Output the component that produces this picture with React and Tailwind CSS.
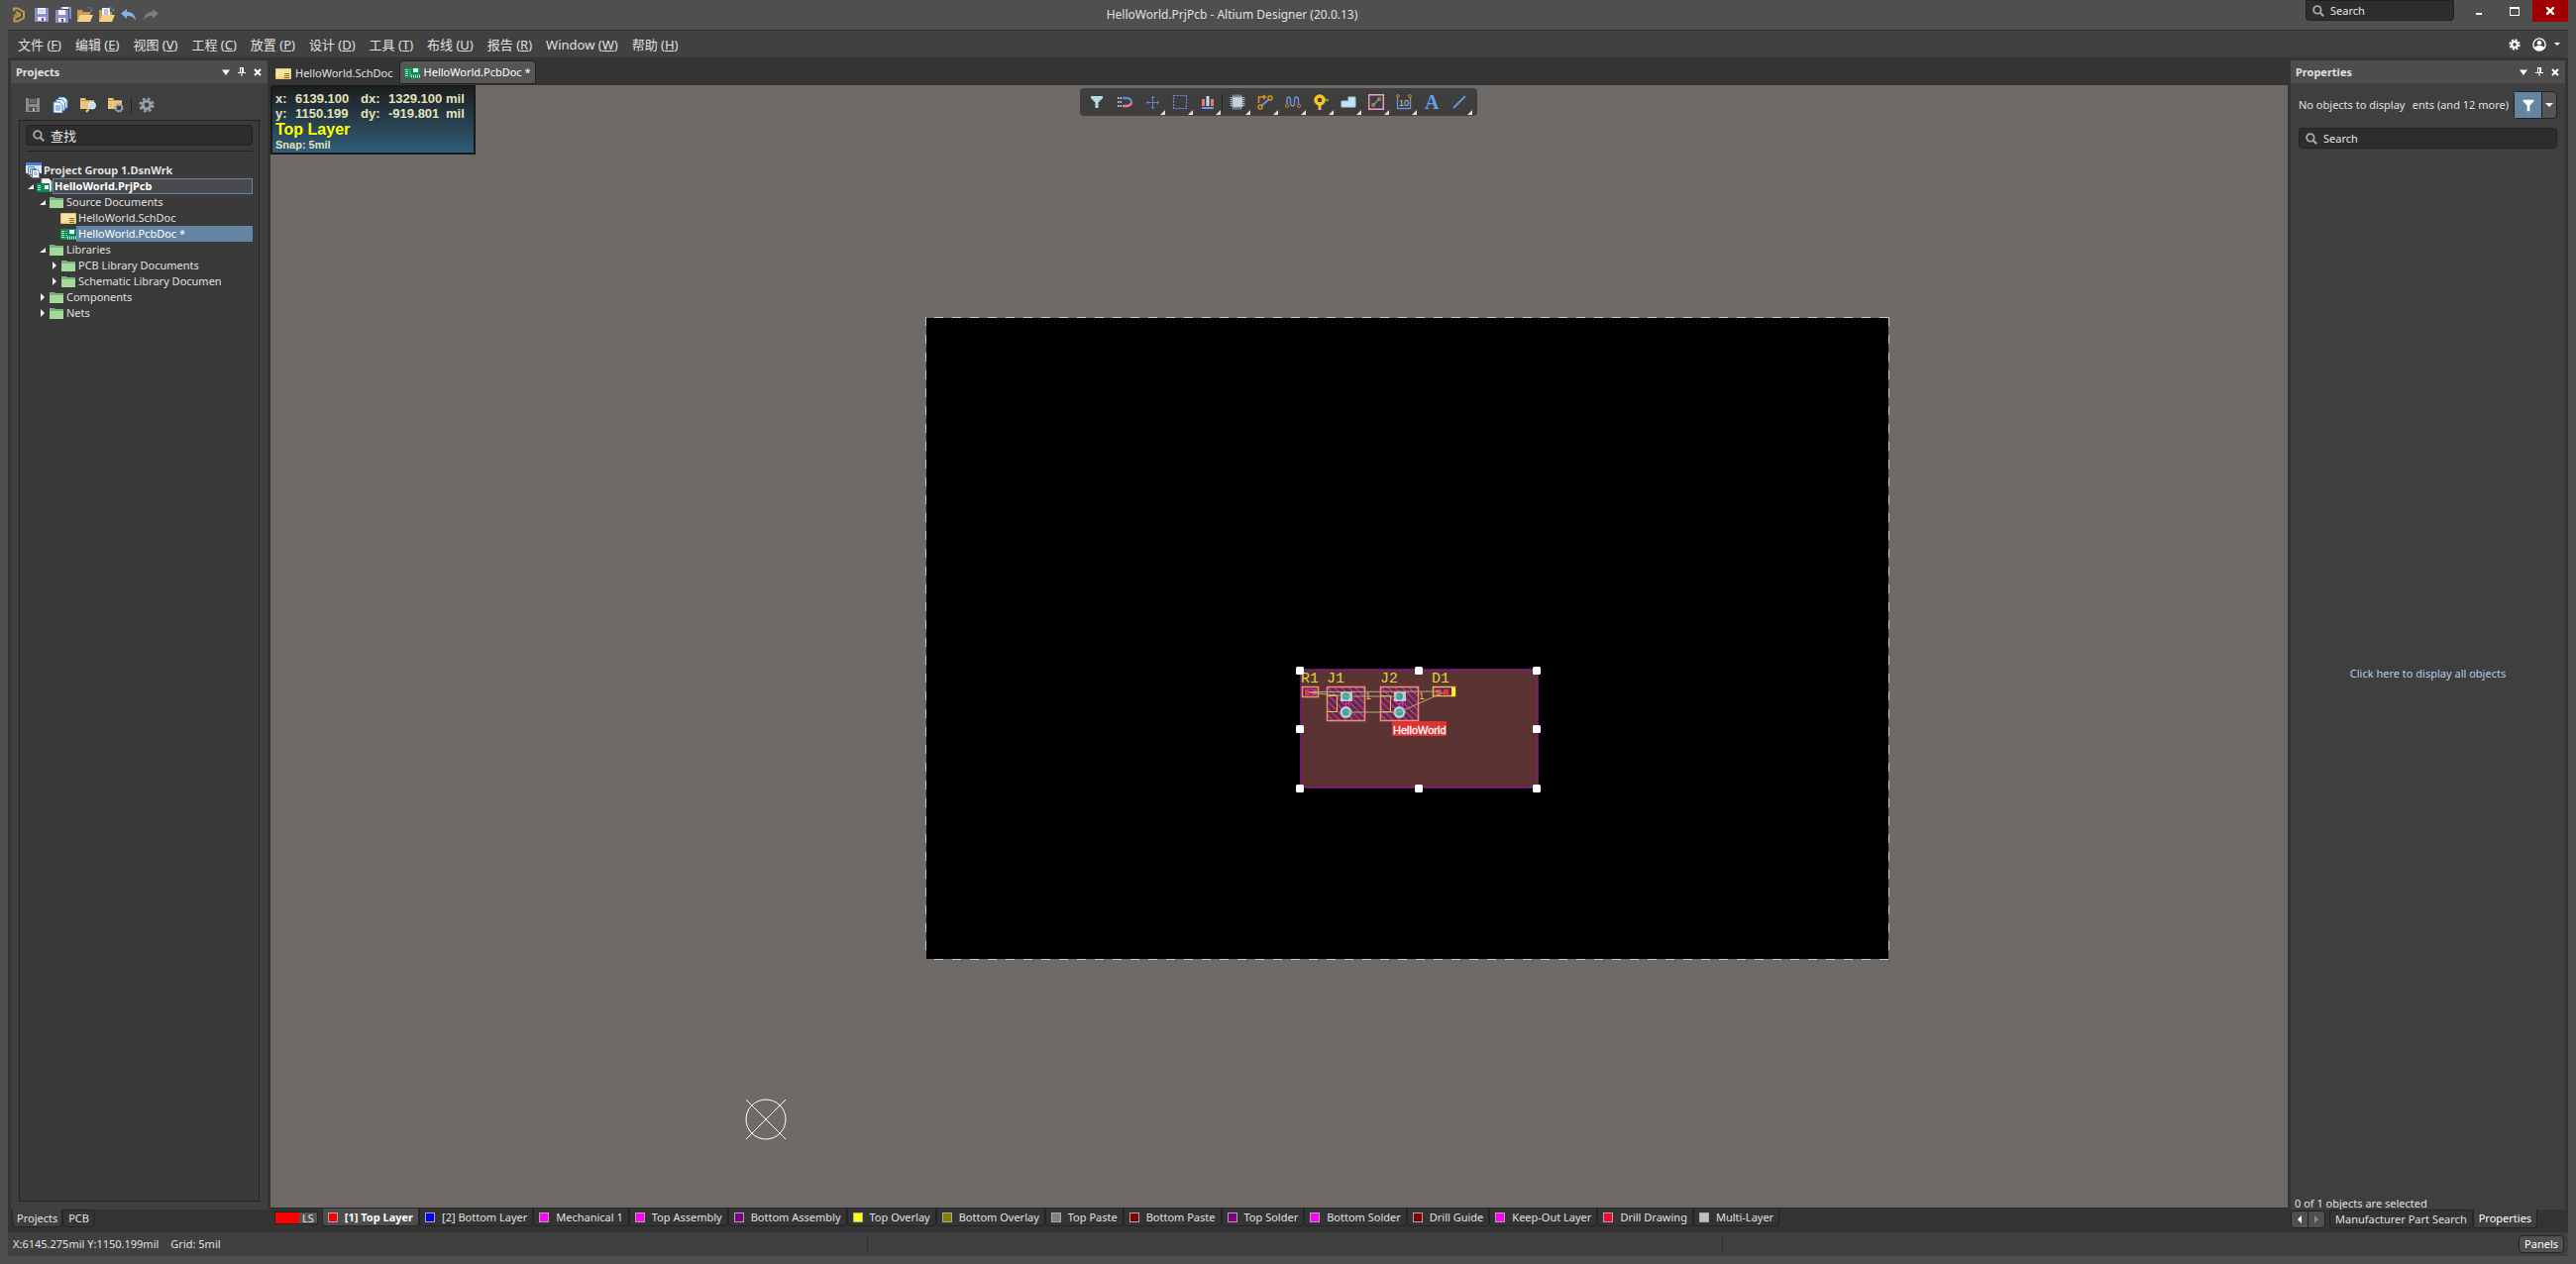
import React from 'react';

const MENUS = [
  ['文件', 'F'],
  ['编辑', 'E'],
  ['视图', 'V'],
  ['工程', 'C'],
  ['放置', 'P'],
  ['设计', 'D'],
  ['工具', 'T'],
  ['布线', 'U'],
  ['报告', 'R'],
  ['Window', 'W'],
  ['帮助', 'H'],
];

const LAYERS = [
  { name: '[1] Top Layer', color: '#ff0000', active: true },
  { name: '[2] Bottom Layer', color: '#0000ff' },
  { name: 'Mechanical 1', color: '#ff00ff' },
  { name: 'Top Assembly', color: '#ff00ff' },
  { name: 'Bottom Assembly', color: '#800080' },
  { name: 'Top Overlay', color: '#ffff00' },
  { name: 'Bottom Overlay', color: '#808000' },
  { name: 'Top Paste', color: '#808080' },
  { name: 'Bottom Paste', color: '#800000' },
  { name: 'Top Solder', color: '#800080' },
  { name: 'Bottom Solder', color: '#ff00ff' },
  { name: 'Drill Guide', color: '#800000' },
  { name: 'Keep-Out Layer', color: '#ff00ff' },
  { name: 'Drill Drawing', color: '#ff0033' },
  { name: 'Multi-Layer', color: '#c0c0c0' },
];

/* ---------- icons ---------- */

function Icon({ children, className = 'size-4' }) {
  return (
    <svg viewBox="0 0 16 16" className={`shrink-0 ${className}`} fill="none" aria-hidden="true">
      {children}
    </svg>
  );
}

function LogoIcon() {
  return (
    <Icon>
      <path d="M2 4V1.500h4L12 5v6l-6 3.500H2.500V11L8 8.500V7L4 5" stroke="#c09a4e" strokeWidth="2" />
      <path d="M2 9 6 7" stroke="#a8843c" strokeWidth="2" />
    </Icon>
  );
}

function SaveIcon({ gray }) {
  const c = gray ? '#8a8a8a' : '#8c8cc8';
  return (
    <Icon>
      <path d="M1 1h14v14H1z" fill={c} />
      <path d="M4 1h8v6H4z" fill={gray ? '#4a4a4a' : '#f4f4ff'} />
      <path d="M5 3h6M5 5h6" stroke={gray ? '#8a8a8a' : '#b8b8d8'} />
      <path d="M4 10h8v4H4z" fill={gray ? '#505050' : '#e8e8fa'} />
      <path d="M8 11h2v3H8z" fill={gray ? '#b0b0b0' : '#50508c'} />
    </Icon>
  );
}

function SaveAllIcon() {
  return (
    <Icon>
      <path d="M5 0h11v12h-2V2H5z" fill="#8c8cc8" />
      <path d="M7 0h6v2H7z" fill="#f0f0ff" />
      <path d="M0 3h13v13H0z" fill="#8c8cc8" />
      <path d="M3 3h7v5H3z" fill="#f4f4ff" />
      <path d="M3 11h7v4H3z" fill="#e8e8fa" />
      <path d="M6 12h2v3H6z" fill="#50508c" />
    </Icon>
  );
}

function OpenIcon({ doc }) {
  return (
    <Icon>
      <path d="M0 3h5l1 2h7v10H0z" fill="#c89c50" />
      {doc && <path d="M3 1h8v9H3z" fill="#f0f4fa" />}
      {doc && <path d="M5 3h4M5 5h4M5 7h4" stroke="#7a96b8" />}
      <path d="M3 8h13l-3 7H0z" fill="#f5cf86" />
      <path d="M10 1c3-1 4 0 4.500 3M12.500 3l2 1.500L16 2" stroke="#5686a8" />
    </Icon>
  );
}

function UndoIcon({ redo }) {
  return (
    <Icon>
      <g transform={redo ? 'translate(16 0) scale(-1 1)' : undefined}>
        <path d="M0 6.500 6 2v3c5 0 8 2 9 9-2-4-4.500-5-9-5v3z" fill={redo ? '#7d7d7d' : '#86b0ea'} />
      </g>
    </Icon>
  );
}

function DocsIcon() {
  return (
    <Icon>
      <path d="M6 0h6l3 3v8H6z" fill="#dcecfa" stroke="#4a86c8" />
      <path d="M3.500 2.500h6l3 3v8h-9z" fill="#dcecfa" stroke="#4a86c8" />
      <path d="M1 5h6l3 3v8H1z" fill="#f4faff" stroke="#4a86c8" />
      <path d="M3 9h5M3 11h5M3 13h5" stroke="#4a86c8" />
    </Icon>
  );
}

function FolderToolIcon({ gear }) {
  return (
    <Icon>
      <path d="M0 1h5l1 2h8v9H0z" fill="#eac47c" />
      <path d="M0 3h14v1H0z" fill="#c89c50" />
      {gear ? (
        <circle cx="11" cy="11" r="3.500" fill="#3f3f3f" stroke="#9aa8b0" strokeWidth="2" strokeDasharray="2 0.700" />
      ) : (
        <>
          <path d="M8.500 12 6 15" stroke="#eac47c" strokeWidth="2" />
          <circle cx="12" cy="8.500" r="3.500" fill="#c4dcf4" stroke="#e8f0f8" />
        </>
      )}
      {gear && <circle cx="11" cy="11" r="3" stroke="#9aa8b0" />}
    </Icon>
  );
}

function GearIcon({ className, color = '#93a2aa', hole = '#3f3f3f' }) {
  return (
    <Icon className={className}>
      <circle cx="8" cy="8" r="6.300" stroke={color} strokeWidth="2.600" strokeDasharray="2.800 2.150" />
      <circle cx="8" cy="8" r="5.300" fill={color} />
      <circle cx="8" cy="8" r="2.400" fill={hole} />
    </Icon>
  );
}

function SearchIcon() {
  return (
    <Icon className="size-3">
      <circle cx="6.500" cy="6.500" r="5" stroke="#a8a8a8" strokeWidth="2.400" />
      <path d="m10 10 5 5" stroke="#a8a8a8" strokeWidth="3" />
    </Icon>
  );
}

function SchIcon() {
  return (
    <Icon>
      <path d="M.5 3.500h15v10H.5z" fill="#f5d98c" stroke="#e8c468" />
      <path d="M1 4h14v4L1 12z" fill="#fbe8b0" opacity=".6" />
      <path d="M9 8.500h5M9 10.500h5M9 12.500h5" stroke="#8a6c28" />
    </Icon>
  );
}

function PcbIcon() {
  return (
    <Icon>
      <path d="M0 3h16v11H0z" fill="#0a8a54" />
      <path d="M1 5.500h3M1 7.500h3M1 9.500h3M1 11.500h3" stroke="#b8ecd0" />
      <path d="M6 5v7" stroke="#b8ecd0" strokeDasharray="1 1" />
      <path d="M9 4h5v4H9z" fill="#f4fff8" />
      <path d="M7 12h9" stroke="#b8ecd0" strokeDasharray="1 1" strokeWidth="3" />
    </Icon>
  );
}

function FolderIcon() {
  return (
    <Icon>
      <path d="M1 3h5l1 1h8v10H1z" fill="#78b478" />
      <path d="M1 6h14v8H1z" fill="#a4d89c" />
    </Icon>
  );
}

function GroupIcon() {
  return (
    <Icon>
      <path d="M0 0h16v11H0z" fill="#dce6fa" />
      <path d="M0 0h16v3H0z" fill="#4a78dc" />
      <path d="M2.500 4.500h6v8h-6zM4.500 6.500h6v8h-6z" fill="#e8f0fa" stroke="#5c7ca8" />
      <path d="M6.500 7.500h5l2 2v6h-7z" fill="#f8fcff" stroke="#5c7ca8" />
      <path d="M8 10h3M8 12h4" stroke="#6c8cb8" />
    </Icon>
  );
}

function ProjectIcon() {
  return (
    <Icon>
      <path d="M5 0h7l3 3v10H5z" fill="#f4f4fa" stroke="#a8a8b8" />
      <path d="M0 5h13v9H0z" fill="#0a8a54" />
      <path d="M1 7.500h3M1 9.500h3M1 11.500h3" stroke="#b8ecd0" />
      <path d="M8 7h4v4H8z" fill="#f4fff8" />
    </Icon>
  );
}

function Funnel({ className, color }) {
  return (
    <Icon className={className}>
      <path d="M2 2h12v2L9.500 8.500V15h-3V8.500L2 4z" fill={color} />
    </Icon>
  );
}

function PanelButtons() {
  return (
    <div className="flex items-center gap-2">
      <button type="button" aria-label="Panel menu">
        <Icon className="size-2">
          <path d="M0 3h16L8 14z" fill="#fff" />
        </Icon>
      </button>
      <button type="button" aria-label="Pin panel">
        <svg viewBox="0 0 8 9" className="h-[9px] w-2" fill="none">
          <path d="M2 0h4v5H2zM0 5h8v1H0zM3.500 6h1v3h-1z" fill="#fff" />
          <path d="M3 1h1v4H3z" fill="#4d4d4d" />
        </svg>
      </button>
      <button type="button" aria-label="Close panel">
        <svg viewBox="0 0 8 8" className="size-2" fill="none">
          <path d="m1 1 6 6M7 1 1 7" stroke="#fff" strokeWidth="2" />
        </svg>
      </button>
    </div>
  );
}

/* ---------- window chrome ---------- */

function SearchBox({ id, text, className }) {
  return (
    <label
      htmlFor={id}
      className={`flex items-center gap-[6px] border border-[#222] bg-[#2d2d2d] pl-[6px] ${className}`}
    >
      <SearchIcon />
      <input
        id={id}
        type="text"
        aria-label={text}
        placeholder={text}
        className="h-full w-full min-w-0 bg-transparent outline-none placeholder:text-[#e6e6e6]"
      />
    </label>
  );
}

function TitleBar() {
  return (
    <header className="flex h-[30px] shrink-0 items-center pl-3">
      <div className="flex items-center gap-[6px]">
        <LogoIcon />
        <button type="button" aria-label="Save"><SaveIcon /></button>
        <button type="button" aria-label="Save all"><SaveAllIcon /></button>
        <button type="button" aria-label="Open"><OpenIcon /></button>
        <button type="button" aria-label="Open document"><OpenIcon doc /></button>
        <button type="button" aria-label="Undo"><UndoIcon /></button>
        <button type="button" aria-label="Redo"><UndoIcon redo /></button>
      </div>
      <h1 className="flex-1 text-center text-[12px]">HelloWorld.PrjPcb - Altium Designer (20.0.13)</h1>
      <div className="flex items-start self-start pr-2">
        <SearchBox id="app-search" text="Search" className="h-[21px] w-[150px] rounded-b" />
        <button type="button" aria-label="Minimize" className="ml-[7px] flex h-[22px] w-9 items-center justify-center">
          <span className="mt-[6px] h-[2px] w-[6px] bg-white" />
        </button>
        <button type="button" aria-label="Maximize" className="flex h-[22px] w-9 items-center justify-center">
          <span className="h-[9px] w-[10px] border border-t-2 border-white" />
        </button>
        <button type="button" aria-label="Close" className="flex h-[22px] w-9 items-center justify-center bg-[#a00000]">
          <svg viewBox="0 0 8 8" className="size-2">
            <path d="m0 0 8 8M8 0 0 8" stroke="#fff" strokeWidth="2.400" />
          </svg>
        </button>
      </div>
    </header>
  );
}

function MenuBar() {
  return (
    <nav className="flex h-[27px] shrink-0 items-center justify-between bg-[#414141] pr-2 pl-[10px]">
      <div className="flex items-center gap-[14px] text-[13px]">
        {MENUS.map(([label, key]) => (
          <button type="button" key={key} className="whitespace-nowrap">
            {label} (<u>{key}</u>)
          </button>
        ))}
      </div>
      <div className="flex items-center gap-3">
        <button type="button" aria-label="Settings">
          <GearIcon className="size-3" color="#fff" hole="#414141" />
        </button>
        <button type="button" aria-label="Account" className="flex items-center gap-2">
          <Icon className="size-[14px]">
            <circle cx="8" cy="8" r="7" stroke="#fff" strokeWidth="1.600" />
            <circle cx="8" cy="6" r="2.600" fill="#fff" />
            <path d="M2.500 11c3-2.500 8-2.500 11 0-1 2-3 4-5.500 4s-4.500-2-5.500-4z" fill="#fff" />
          </Icon>
          <svg viewBox="0 0 6 4" className="h-1 w-[6px]">
            <path d="M0 0h6L3 3z" fill="#fff" />
          </svg>
        </button>
      </div>
    </nav>
  );
}

/* ---------- projects panel ---------- */

function Arrow({ open }) {
  return (
    <svg viewBox="0 0 6 8" className="h-2 w-[6px] shrink-0">
      {open ? <path d="M6 2v5H0z" fill="#f0f0f0" /> : <path d="M1 0v8l4-4z" fill="#f0f0f0" />}
    </svg>
  );
}

function TreeRow({ indent, arrow, icon, text, clip, state }) {
  let box = 'border-b border-[#353535] pl-[2px]';
  if (state === 'focus') box = 'border border-[#6484a4] bg-[#4a4a4a] pl-px font-bold text-white';
  if (state === 'selected') box = 'bg-[#6484a4] pl-[2px] text-white';
  if (state === 'root') box = 'pl-[2px] font-bold';
  return (
    <li className={`flex h-4 items-center ${indent}`}>
      {arrow && <Arrow open={arrow === 'open'} />}
      <span className={arrow ? 'ml-[3px]' : ''}>{icon}</span>
      <button type="button" className={`flex h-4 min-w-0 flex-1 items-center text-left ${box}`}>
        <span className={`whitespace-nowrap ${clip ? 'w-36 overflow-hidden' : ''}`}>{text}</span>
      </button>
    </li>
  );
}

function ProjectsPanel() {
  return (
    <aside className="flex w-[259px] shrink-0 flex-col">
      <div className="flex h-[23px] shrink-0 items-center justify-between bg-[#4d4d4d] pr-[6px] pl-[5px]">
        <h2 className="font-bold">Projects</h2>
        <PanelButtons />
      </div>
      <div className="flex min-h-0 flex-1 flex-col bg-[#3f3f3f] px-2 pb-2">
        <div className="flex h-[37px] shrink-0 items-center gap-3 pt-[7px] pl-[6px]">
          <button type="button" aria-label="Save"><SaveIcon gray /></button>
          <button type="button" aria-label="Copy documents"><DocsIcon /></button>
          <button type="button" aria-label="Explore"><FolderToolIcon /></button>
          <div className="flex items-center gap-[7px]">
            <button type="button" aria-label="Project options"><FolderToolIcon gear /></button>
            <span className="h-4 w-px bg-[#242424]" />
            <button type="button" aria-label="Settings"><GearIcon /></button>
          </div>
        </div>
        <div className="min-h-0 flex-1 border border-[#222] bg-[#3a3a3a] px-[6px] pt-1">
          <SearchBox id="project-search" text="查找" className="h-[21px] rounded text-[13px]" />
          <div className="mt-[5px] mb-[11px] h-px bg-[#222]" />
          <ul>
            <TreeRow indent="" icon={<GroupIcon />} text="Project Group 1.DsnWrk" state="root" />
            <TreeRow indent="pl-[2px]" arrow="open" icon={<ProjectIcon />} text="HelloWorld.PrjPcb" state="focus" />
            <TreeRow indent="pl-[14px]" arrow="open" icon={<FolderIcon />} text="Source Documents" />
            <TreeRow indent="pl-[35px]" icon={<SchIcon />} text="HelloWorld.SchDoc" />
            <TreeRow indent="pl-[35px]" icon={<PcbIcon />} text="HelloWorld.PcbDoc *" state="selected" />
            <TreeRow indent="pl-[14px]" arrow="open" icon={<FolderIcon />} text="Libraries" />
            <TreeRow indent="pl-[26px]" arrow="closed" icon={<FolderIcon />} text="PCB Library Documents" />
            <TreeRow indent="pl-[26px]" arrow="closed" icon={<FolderIcon />} text="Schematic Library Documents" clip />
            <TreeRow indent="pl-[14px]" arrow="closed" icon={<FolderIcon />} text="Components" />
            <TreeRow indent="pl-[14px]" arrow="closed" icon={<FolderIcon />} text="Nets" />
          </ul>
        </div>
      </div>
      <div className="mb-[5px] flex h-[18px] shrink-0 pl-px">
        <button type="button" className="rounded-b border border-t-0 border-[#242424] bg-[#3f3f3f] px-1">
          Projects
        </button>
        <button type="button" className="rounded-b border border-[#242424] px-[5px]">PCB</button>
      </div>
    </aside>
  );
}

/* ---------- editor ---------- */

const TOOLS = [
  { name: 'Filter', icon: <path d="M2 2h12v2L9.500 8.500V14h-3V8.500L2 4z" fill="#b4dce8" /> },
  {
    name: 'Snapping',
    icon: (
      <>
        <path d="M6 4h4c5 0 5 4 4.500 4" stroke="#5a86d8" strokeWidth="2.500" />
        <path d="M6 12h4c5 0 5-4 4.500-4" stroke="#ee8088" strokeWidth="2.500" />
        <path d="M1 4h4M1 8h4M1 12h4" stroke="#b8ccd0" strokeWidth="2" strokeDasharray="1.500 1" />
      </>
    ),
  },
  {
    name: 'Move',
    menu: true,
    icon: (
      <>
        <path d="M2 8.500h13M8.500 2v13" stroke="#6080d8" />
        <path d="m2 8.500 2-2v4zM15 8.500l-2-2v4zM8.500 2l-2 2h4zM8.500 15l-2-2h4z" fill="#6080d8" />
      </>
    ),
  },
  {
    name: 'Select',
    menu: true,
    icon: <path d="M1.500 1.500h13v13h-13z" stroke="#7090f0" strokeWidth="1.200" strokeDasharray="2 1.200" />,
  },
  {
    name: 'Align',
    menu: true,
    icon: (
      <>
        <path d="M2 5h3v7H2zM11 5h3v7h-3z" fill="#e87878" />
        <path d="M6.500 2h3v10h-3z" fill="#b8e0ec" />
        <path d="M2 14h12" stroke="#7098e8" strokeWidth="2" />
      </>
    ),
  },
  {
    name: 'Place component',
    menu: true,
    divider: true,
    icon: (
      <>
        <path d="M3 1.500h10M3 14.500h10M1.500 3v10M14.500 3v10" stroke="#9cc0d0" strokeWidth="2" strokeDasharray="1 1" />
        <path d="M3 3h10v10H3z" fill="#c8d0d8" stroke="#a4b4c0" />
      </>
    ),
  },
  {
    name: 'Route',
    menu: true,
    icon: (
      <>
        <path d="M4 12 12 5" stroke="#6890d0" strokeWidth="2" />
        <path d="M1.500 9V3H7M6 1l2.500 2L6 5" stroke="#d8961c" strokeWidth="1.500" />
        <circle cx="13" cy="4" r="2" stroke="#d8961c" strokeWidth="1.500" />
        <circle cx="3" cy="13" r="2" stroke="#d8961c" strokeWidth="1.500" />
      </>
    ),
  },
  {
    name: 'Tune length',
    menu: true,
    icon: (
      <>
        <path d="M2 10V6c0-4 3.500-4 3.500 0v3c0 4 4 4 4 0V6c0-4 4-4 4 0v4" stroke="#6890d0" strokeWidth="1.500" />
        <circle cx="2" cy="12" r="1.600" stroke="#b88428" />
        <circle cx="14" cy="12" r="1.600" stroke="#b88428" />
      </>
    ),
  },
  {
    name: 'Via',
    menu: true,
    icon: (
      <>
        <path d="M9 6h7" stroke="#58a848" strokeWidth="2.500" />
        <path d="M7 8v8" stroke="#e8b088" strokeWidth="3" />
        <circle cx="7" cy="6" r="4" stroke="#f8c818" strokeWidth="3.500" />
      </>
    ),
  },
  { name: 'Polygon', menu: true, icon: <path d="M1 7h7V3h7v10H1z" fill="#c0e4f4" stroke="#a4ccdc" /> },
  {
    name: 'Keepout',
    menu: true,
    icon: (
      <>
        <path d="M.7.7h14.600v14.600H.7z" stroke="#f098e0" strokeWidth="1.400" />
        <path d="m5 11 6-6" stroke="#6890d0" strokeWidth="1.500" />
        <circle cx="5" cy="11" r="1.500" stroke="#d8961c" />
        <circle cx="11" cy="5" r="1.500" stroke="#d8961c" />
      </>
    ),
  },
  {
    name: 'Dimension',
    menu: true,
    icon: (
      <>
        <path d="M1.500 3v11.500h13V3" stroke="#6890d0" strokeWidth="1.400" />
        <circle cx="2" cy="2" r="1.400" stroke="#b88428" />
        <circle cx="14" cy="2" r="1.400" stroke="#b88428" />
        <text x="3" y="12" fontSize="9" fill="#c8c8c8" fontFamily="Liberation Sans, sans-serif">10</text>
      </>
    ),
  },
  {
    name: 'String',
    icon: (
      <text x="1" y="15" fontSize="20" fontWeight="bold" fill="#64a0ec" fontFamily="Liberation Serif, serif">A</text>
    ),
  },
  { name: 'Line', menu: true, icon: <path d="M2 14 14 2" stroke="#5c98e0" strokeWidth="2" /> },
];

function ActiveBar() {
  return (
    <div className="absolute top-[3px] left-[817px] flex h-7 rounded-sm bg-[#3e3e3e] pr-1 pl-[3px]">
      {TOOLS.map((tool) => (
        <React.Fragment key={tool.name}>
          {tool.divider && <span className="my-[6px] mr-px w-px bg-[#202020]" />}
          <button
            type="button"
            aria-label={tool.name}
            className="relative flex w-7 items-center justify-center"
          >
            <Icon className="size-4 overflow-visible">{tool.icon}</Icon>
            {tool.menu && (
              <svg viewBox="0 0 5 5" className="absolute right-px bottom-px size-[5px]">
                <path d="M5 0v5H0z" fill="#e0e0e0" />
              </svg>
            )}
          </button>
        </React.Fragment>
      ))}
    </div>
  );
}

function HeadsUp() {
  return (
    <div className="absolute top-0 left-0 h-[70px] w-[207px] border-2 border-[#1a1a1a] bg-linear-to-b from-[#1c1f20] to-[#2e5e7a] pt-1 pl-[3px] font-['Liberation_Sans',Arial,sans-serif] font-bold text-[#e2e2b8]">
      <dl className="grid grid-cols-[20px_66px_28px_58px_1fr] text-[13px] leading-[15px]">
        <dt>x:</dt>
        <dd>6139.100</dd>
        <dt>dx:</dt>
        <dd>1329.100</dd>
        <dd>mil</dd>
        <dt>y:</dt>
        <dd>1150.199</dd>
        <dt>dy:</dt>
        <dd>-919.801</dd>
        <dd>mil</dd>
      </dl>
      <p className="text-[16px] leading-[17px] text-[#ffff00]">Top Layer</p>
      <p className="text-[11px] leading-[14px]">Snap: 5mil</p>
    </div>
  );
}

function Header({ x }) {
  return (
    <g transform={`translate(${x} 693)`}>
      <rect x="0.500" y="0.500" width="38" height="34" fill="url(#hatch)" stroke="#f08c78" strokeWidth="1.500" />
      <path d="M1 9.500h9.500v16H1" stroke="#e8c048" fill="none" />
      <rect x="14" y="5" width="12" height="10" fill="#c8c8cc" />
      <circle cx="19.500" cy="10" r="3.600" fill="#30a8a8" />
      <circle cx="19.500" cy="26" r="6" fill="#c8c8cc" />
      <circle cx="19.500" cy="26" r="3.600" fill="#30a8a8" />
      <path d="M19.500 20v-4l2 2 1-2v3M23 20v-1" stroke="#f020f0" fill="none" />
      <path d="M40.500 7.500l1.500-1v6M40.500 12.500h4" stroke="#e8c838" fill="none" />
    </g>
  );
}

const HANDLES = [
  [1308, 673], [1428, 673], [1547, 673],
  [1308, 732], [1547, 732],
  [1308, 792], [1428, 792], [1547, 792],
];

// viewBox is in window coordinates so every object keeps its place on the sheet
function Board() {
  return (
    <svg viewBox="273 86 2036 1133" className="absolute top-0 left-0 h-[1133px] w-[2036px]" aria-label="PCB">
      <defs>
        <pattern id="grid" x="936" y="322" width="4" height="4" patternUnits="userSpaceOnUse">
          <rect width="1" height="1" fill="#fff" opacity=".05" />
        </pattern>
        <pattern id="hatch" width="7" height="7" patternUnits="userSpaceOnUse">
          <path d="M-1-1l9 9M-1 6l2 2M6-1l2 2" stroke="#e020e0" strokeWidth="1.200" />
        </pattern>
      </defs>
      <rect x="935" y="321" width="971" height="647" fill="#000" />
      <path d="M934 320.500h972" stroke="#c8c8c8" strokeDasharray="9 9" strokeDashoffset="-9" />
      <path d="M934 968.500h972" stroke="#c8c8c8" strokeDasharray="9 9" strokeDashoffset="-9" />
      <path d="M934.500 320v648" stroke="#c8c8c8" strokeDasharray="9 9" />
      <path d="M1906.500 320v648" stroke="#c8c8c8" strokeDasharray="9 9" />

      <rect x="1313" y="676" width="239" height="119" fill="#5a3232" stroke="#8c188c" strokeWidth="1.500" />
      <rect x="935" y="321" width="971" height="647" fill="url(#grid)" />

      <g fill="#dcd838" fontFamily="Liberation Mono, monospace" fontSize="15">
        <text x="1313" y="689">R1</text>
        <text x="1339" y="689">J1</text>
        <text x="1393" y="689">J2</text>
        <text x="1445" y="689">D1</text>
      </g>

      <Header x={1339} />
      <Header x={1393} />

      <rect x="1314.500" y="693.500" width="16" height="10" fill="#5a2850" stroke="#e0a050" strokeWidth="1.500" />
      <path d="M1317 696h4v6h-4zM1325 696h4v6h-4z" fill="#f03040" />
      <path d="M1317 696h12M1317 701.500h12" stroke="#e020c0" />

      <rect x="1446.500" y="693.500" width="22" height="9" fill="#5a2850" stroke="#e8c040" strokeWidth="1.500" />
      <path d="M1465 694h4v9h-4z" fill="#f8f020" />
      <path d="M1449 696h5v5h-5zM1457 696h5v5h-5z" fill="#f03040" />

      <path
        d="M1321 698.500 1455 698M1321 699l38 4h53M1359 719h53l45-20"
        stroke="#b0b084"
        fill="none"
      />

      <rect x="1405" y="728" width="55" height="15" fill="#dc3434" />
      <text x="1406" y="741" fontSize="11" fill="#fff" stroke="#fff" strokeWidth=".300" fontFamily="Liberation Sans, sans-serif">
        HelloWorld
      </text>

      {HANDLES.map(([x, y]) => (
        <rect key={`${x}-${y}`} x={x} y={y} width="8" height="8" rx="1.500" fill="#fff" />
      ))}

      <circle cx="773" cy="1130" r="20" stroke="#fff" fill="none" />
      <path d="m753 1110 40 40M793 1110l-40 40" stroke="#fff" />
    </svg>
  );
}

function Editor() {
  return (
    <main className="flex min-w-0 flex-1 flex-col">
      <div className="flex h-[25px] shrink-0">
        <button type="button" className="flex items-center gap-1 pr-[6px] pl-[5px]">
          <SchIcon />
          HelloWorld.SchDoc
        </button>
        <button
          type="button"
          className="flex h-6 items-center gap-1 rounded-t border border-[#222] bg-[#555] px-1 text-white"
        >
          <PcbIcon />
          HelloWorld.PcbDoc *
        </button>
      </div>
      <div className="relative min-h-0 flex-1 overflow-hidden bg-[#6e6a68]">
        <Board />
        <ActiveBar />
        <HeadsUp />
      </div>
      <div className="flex h-[25px] shrink-0 border-t border-[#242424] pl-1">
        <button type="button" className="mt-[3px] flex h-[13px] items-center border border-[#222] bg-[#555] leading-none">
          <span className="h-full w-6 bg-[#ff0000]" />
          <span className="px-[3px]">LS</span>
        </button>
        <div className="ml-1 flex h-[18px]">
          {LAYERS.map((layer) => (
            <button
              type="button"
              key={layer.name}
              className={`flex items-center gap-[7px] rounded-b border border-t-0 border-[#242424] px-[5px] whitespace-nowrap ${
                layer.active ? 'bg-[#4d4d4d] font-bold text-white' : ''
              }`}
            >
              <span className="size-[10px] border border-[#a8a8a8]" style={{ backgroundColor: layer.color }} />
              {layer.name}
            </button>
          ))}
        </div>
      </div>
    </main>
  );
}

/* ---------- properties panel ---------- */

function PropertiesPanel() {
  return (
    <aside className="flex w-[277px] shrink-0 flex-col">
      <div className="flex h-[23px] shrink-0 items-center justify-between bg-[#4d4d4d] pr-[6px] pl-[5px]">
        <h2 className="font-bold">Properties</h2>
        <PanelButtons />
      </div>
      <div className="flex min-h-0 flex-1 flex-col bg-[#3f3f3f] pt-2 pr-2 pl-2">
        <div className="flex h-7 shrink-0 items-center justify-between whitespace-nowrap">
          <span>No objects to display</span>
          <div className="flex items-center gap-[5px]">
            <span>ents (and 12 more)</span>
            <div className="flex h-7 rounded border border-[#222] bg-[#555]">
              <button type="button" aria-label="Filter" className="flex w-7 items-center justify-center border-r border-[#222] bg-[#6484a4]">
                <Funnel className="size-[14px]" color="#fff" />
              </button>
              <button type="button" aria-label="Filter options" className="flex w-[14px] items-center justify-center">
                <svg viewBox="0 0 8 4" className="h-1 w-2">
                  <path d="M0 0h8L4 4z" fill="#fff" />
                </svg>
              </button>
            </div>
          </div>
        </div>
        <SearchBox id="prop-search" text="Search" className="mt-[9px] h-[21px] shrink-0 rounded" />
        <div className="flex flex-1 items-center justify-center">
          <a href="#all" className="text-[#b4ccea]">Click here to display all objects</a>
        </div>
      </div>
      <p className="h-3 shrink-0 bg-[#3f3f3f] pl-1 leading-3">0 of 1 objects are selected</p>
      <div className="mb-1 flex h-[19px] shrink-0">
        <div className="mt-px mr-1 flex w-[35px] rounded border border-[#222] bg-[#505050]">
          <button type="button" aria-label="Previous" className="flex flex-1 items-center justify-center border-r border-[#222]">
            <svg viewBox="0 0 4 8" className="h-2 w-1"><path d="M4 0v8L0 4z" fill="#fff" /></svg>
          </button>
          <button type="button" aria-label="Next" className="flex flex-1 items-center justify-center">
            <svg viewBox="0 0 4 8" className="h-2 w-1"><path d="M0 0v8l4-4z" fill="#888" /></svg>
          </button>
        </div>
        <button type="button" className="rounded-b border border-[#242424] px-[5px] whitespace-nowrap">
          Manufacturer Part Search
        </button>
        <button type="button" className="rounded-b border border-t-0 border-[#242424] bg-[#3f3f3f] px-[5px] text-white">
          Properties
        </button>
      </div>
    </aside>
  );
}

function StatusBar() {
  return (
    <footer className="flex h-6 shrink-0 items-center bg-[#404040]">
      <div className="flex flex-[65] gap-3 pl-[5px]">
        <span>X:6145.275mil Y:1150.199mil</span>
        <span>Grid: 5mil</span>
      </div>
      <div className="h-4 flex-[65] border-l border-[#2c2c2c]" />
      <div className="flex h-4 flex-[64] items-center justify-end border-l border-[#2c2c2c] pr-1">
        <button type="button" className="h-[18px] rounded border border-[#222] bg-[#505050] px-[5px] text-white">
          Panels
        </button>
      </div>
    </footer>
  );
}

export default function App() {
  return (
    <div className="flex h-screen flex-col overflow-hidden bg-[#4f4f4f] pb-2 font-['Noto_Sans','Noto_Sans_CJK_SC',sans-serif] text-[11px] leading-4 text-[#e0e0e0]">
      <TitleBar />
      <div className="mx-2 flex min-h-0 flex-1 flex-col border-t border-[#2a2a2a] bg-[#343434]">
        <MenuBar />
        <div className="flex min-h-0 flex-1 gap-[3px] px-[3px] pt-[3px]">
          <ProjectsPanel />
          <Editor />
          <PropertiesPanel />
        </div>
        <StatusBar />
      </div>
    </div>
  );
}
